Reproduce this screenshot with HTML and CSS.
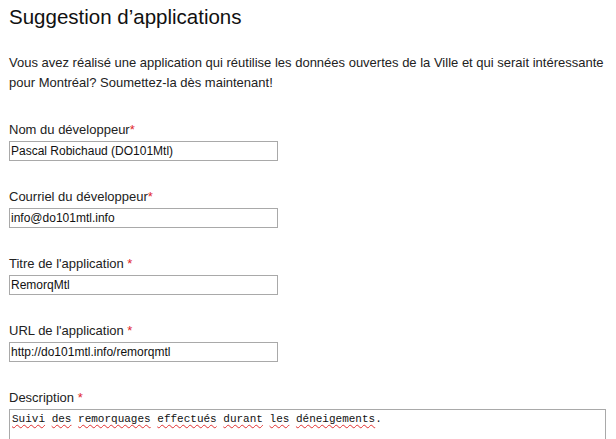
FILE: index.html
```html
<!DOCTYPE html>
<html lang="fr">
<head>
    <meta charset="UTF-8">
    <meta name="viewport" content="width=device-width, initial-scale=1.0">
    <title>Suggestion d'applications</title>
    <link rel="stylesheet" href="styles.css">
</head>
<body>
    <div class="page">
        <h1 class="page-title">Suggestion d’applications</h1>
        <p class="intro">Vous avez réalisé une application qui réutilise les données ouvertes de la Ville et qui serait intéressante pour Montréal? Soumettez-la dès maintenant!</p>

        <form class="suggest-form">
            <!-- Developer -->
            <div class="field">
                <label for="devName">Nom du développeur<span class="req">*</span></label>
                <input type="text" id="devName" class="text-input" value="Pascal Robichaud (DO101Mtl)">
            </div>
            <div class="field">
                <label for="devMail">Courriel du développeur<span class="req">*</span></label>
                <input type="text" id="devMail" class="text-input" value="info@do101mtl.info">
            </div>

            <!-- Application -->
            <div class="field">
                <label for="appTitle">Titre de l'application <span class="req">*</span></label>
                <input type="text" id="appTitle" class="text-input" value="RemorqMtl">
            </div>
            <div class="field">
                <label for="appUrl">URL de l'application <span class="req">*</span></label>
                <input type="text" id="appUrl" class="text-input" value="http://do101mtl.info/remorqmtl">
            </div>
            <div class="field">
                <label for="appDesc">Description <span class="req">*</span></label>
                <div class="text-area" id="appDesc"><span class="typo">Suivi</span> <span class="typo">des</span> <span class="typo">remorquages</span> <span class="typo">effectués</span> <span class="typo">durant</span> <span class="typo">les</span> <span class="typo">déneigements</span>.</div>
            </div>
        </form>
    </div>
</body>
</html>
```

FILE: styles.css
```css
body {
    margin: 0;
    background-color: #fff;
    font-family: "Liberation Sans", Arial, sans-serif;
    color: #222;
}
.page {
    padding: 0 8px 0 9px;
}
.page-title {
    margin: 5px 0 0;
    font-size: 20.5px;
    line-height: 24px;
    font-weight: normal;
    color: #111;
}
.intro {
    margin: 24px 0 0;
    font-size: 13px;
    line-height: 20px;
    color: #222;
}
.suggest-form {
    margin-top: 29px;
}
.field {
    margin-bottom: 28px;
}
.field label {
    display: block;
    font-size: 13px;
    line-height: 16px;
    color: #222;
}
.req {
    color: #e0262b;
}
.text-input {
    display: block;
    box-sizing: border-box;
    width: 269px;
    height: 20px;
    margin: 3px 0 0;
    padding: 1px 1px;
    border: 1px solid #a9a9a9;
    font-family: "Liberation Sans", Arial, sans-serif;
    font-size: 12px;
    color: #111;
    background: #fff;
}
.text-area {
    box-sizing: border-box;
    width: 597px;
    height: 60px;
    margin-top: 3px;
    padding: 2px 2px;
    border: 1px solid #a9a9a9;
    font-family: "Liberation Mono", "Courier New", monospace;
    font-size: 11px;
    line-height: 14px;
    color: #111;
}
.typo {
    text-decoration: underline wavy #e03030;
    text-decoration-thickness: 1px;
    text-underline-offset: 2px;
}
```
